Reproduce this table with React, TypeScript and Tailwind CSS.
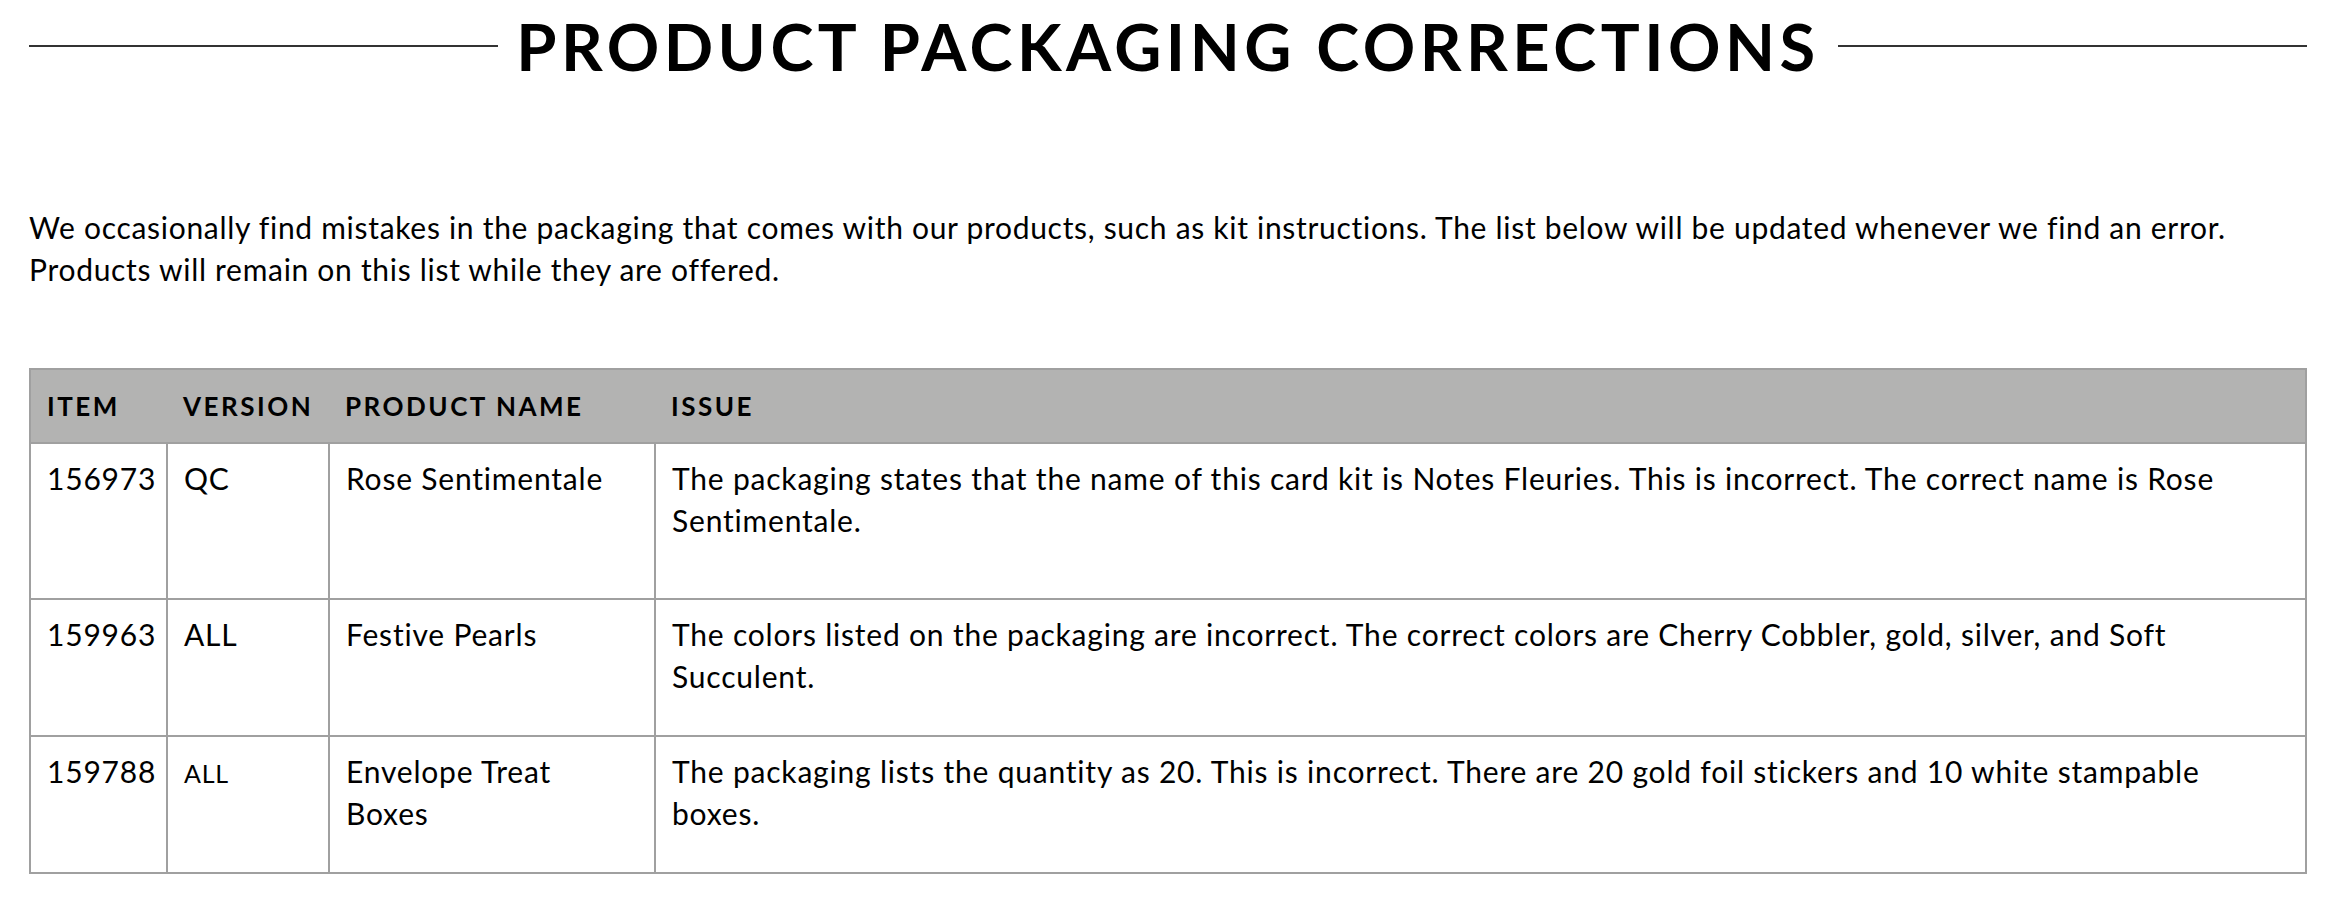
const rows = [
  {
    item: "156973",
    version: "QC",
    name: "Rose Sentimentale",
    issue:
      "The packaging states that the name of this card kit is Notes Fleuries. This is incorrect. The correct name is Rose Sentimentale.",
    tall: true,
  },
  {
    item: "159963",
    version: "ALL",
    name: "Festive Pearls",
    issue:
      "The colors listed on the packaging are incorrect. The correct colors are Cherry Cobbler, gold, silver, and Soft Succulent.",
  },
  {
    item: "159788",
    version: "ALL",
    small: true,
    name: "Envelope Treat Boxes",
    issue:
      "The packaging lists the quantity as 20. This is incorrect. There are 20 gold foil stickers and 10 white stampable boxes.",
  },
];

const cell = "border-2 border-[#a0a0a0] align-top pl-[16px] pr-[20px] pt-[13px]";

export default function App() {
  return (
    <div className="min-h-screen bg-white px-[29px] font-['Lato',sans-serif] text-black">
      <div className="flex items-center gap-[18px] pt-[6px]">
        <div className="h-[2px] flex-1 bg-[#333]" />
        <h1 className="text-[65px] font-bold leading-[80px] tracking-[4.5px]">
          PRODUCT PACKAGING CORRECTIONS
        </h1>
        <div className="h-[2px] flex-1 bg-[#333]" />
      </div>

      <p className="mt-[120px] text-[30px] leading-[42px] tracking-[0.7px]">
        We occasionally find mistakes in the packaging that comes with our products, such as kit instructions. The list
        below will be updated whenever we find an error.
        <br />
        Products will remain on this list while they are offered.
      </p>

      <table className="mt-[78px] w-full table-fixed border-collapse text-[30px] leading-[42px] tracking-[0.8px]">
        <colgroup>
          <col className="w-[137px]" />
          <col className="w-[162px]" />
          <col className="w-[326px]" />
          <col />
        </colgroup>
        <thead>
          <tr className="h-[74px] bg-[#b3b3b2] text-left text-[26px] font-bold tracking-[2.5px]">
            <th className="border-y-2 border-l-2 border-[#a0a0a0] pl-[16px]">ITEM</th>
            <th className="border-y-2 border-[#a0a0a0] pl-[16px]">VERSION</th>
            <th className="border-y-2 border-[#a0a0a0] pl-[16px]">PRODUCT NAME</th>
            <th className="border-y-2 border-r-2 border-[#a0a0a0] pl-[16px]">ISSUE</th>
          </tr>
        </thead>
        <tbody>
          {rows.map((r) => (
            <tr key={r.item} className={r.tall ? "h-[156px]" : "h-[137px]"}>
              <td className={cell}>{r.item}</td>
              <td className={cell}>
                <span className={r.small ? "text-[25px]" : ""}>{r.version}</span>
              </td>
              <td className={cell}>{r.name}</td>
              <td className={cell}>{r.issue}</td>
            </tr>
          ))}
        </tbody>
      </table>
    </div>
  );
}
